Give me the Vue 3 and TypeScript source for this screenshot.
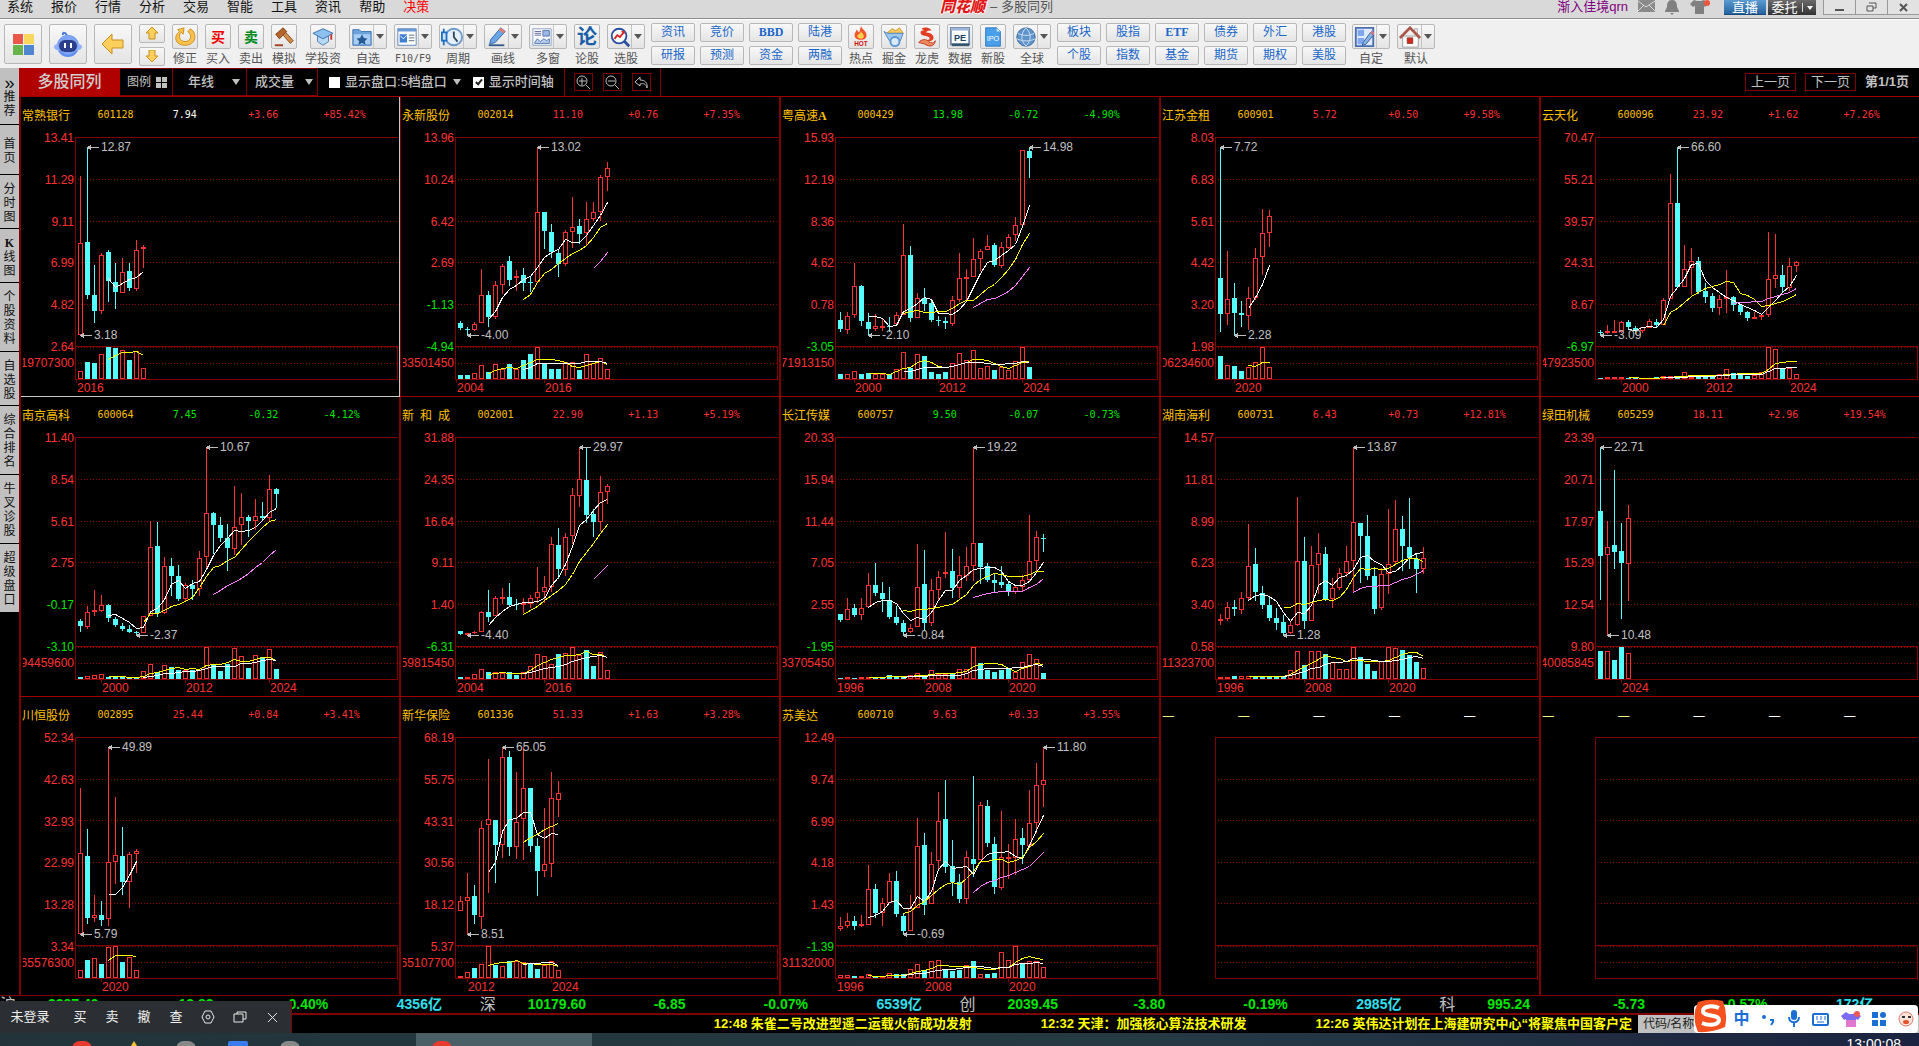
<script setup lang="ts">
interface Stock {
  name: string
  code: string
  price: string
  change: string
  pct: string
  tone: 'up' | 'down' | 'flat'
  axis: string[]
  volume: string
  high: [number, string]
  low: [number, string]
  years: [number, string][]
  candles: string
  ma: [number, string][]
  vol: string
  volMa: [number, string][]
}

/* Series heights are kept in thirds of a pixel, measured from the panel head. */
const UNIT = 3
const HEAD = 42
const STEP = 7
const FIRST = 5

const stocks: Stock[] = [
  {
    name: '常熟银行', code: '601128', price: '7.94', change: '+3.66', pct: '+85.42%', tone: 'flat',
    axis: ['13.41', '11.29', '9.11', '6.99', '4.82', '2.64'], volume: '19707300',
    high: [1, '12.87'], low: [0, '3.18'], years: [[-1, '2016']],
    candles: 'r445,719,243,719 c441,602,157,611 c602,648,510,683 r481,647,474,656 c471,560,465,620 c563,591,504,641 r532,591,489,593 c530,579,504,587 r465,581,435,587 r457,461,450,518',
    ma: [[4, '551 577 566 552 546 528']],
    vol: '828 801 804 778 756 759 766 795 770 820',
    volMa: [[4, '793 782 771 772 769 782']],
  },
  {
    name: '永新股份', code: '002014', price: '11.10', change: '+0.76', pct: '+7.35%', tone: 'up',
    axis: ['13.96', '10.24', '6.42', '2.69', '-1.13', '-4.94'], volume: '83501450',
    high: [11, '13.02'], low: [1, '-4.00'], years: [[-1, '2004'], [12, '2016']],
    candles: 'c684,701,678,704 c702,704,698,720 r688,704,682,706 r601,682,522,682 c600,668,588,695 r571,665,558,670 r514,569,507,595 c499,555,483,572 r544,548,525,585 c540,564,519,585 c561,564,545,588 r352,560,157,560 c351,410,351,459 c411,473,387,488 c474,507,465,543 r412,506,407,510 r397,410,307,456 c393,417,372,445 r374,413,321,447 r352,371,321,375 r247,350,240,375 r220,245,201,285',
    ma: [[4, '672 650 606 582 571 552 545 517 487 473 463 432 443 443 422 392 361 323'], [9, '613 597 562 534 523 504 489 476 465 450 426 396 384'], [19, '520 498 473']],
    vol: '840 840 836 811 831 808 822 809 822 795 777 757 805 822 822 803 803 825 778 806 790 823',
    volMa: [[4, '834 826 820 818 820 811 802 794 794 794 797 803 815 818 811 804 799 808'], [9, '824 817 806 805 804 804 804 805 805 800 799 800 806']],
  },
  {
    name: '粤高速A', code: '000429', price: '13.98', change: '-0.72', pct: '-4.90%', tone: 'down',
    axis: ['15.93', '12.19', '8.36', '4.62', '0.78', '-3.05'], volume: '71913150',
    high: [27, '14.98'], low: [4, '-2.10'], years: [[2, '2000'], [14, '2012'], [26, '2024']],
    candles: 'c675,704,651,708 r664,703,651,716 r574,659,504,666 c573,680,570,690 c681,702,655,720 r694,700,657,707 r693,696,670,706 c693,698,667,710 r661,686,652,690 r481,659,388,659 c480,671,453,679 r610,668,595,668 c609,627,579,645 c626,675,617,680 c675,678,663,690 c678,684,667,699 r616,684,604,692 r550,614,474,620 r546,549,522,615 r493,545,430,545 r469,490,463,525 r454,464,421,464 c450,510,445,513 r457,510,442,517 r428,458,417,460 r391,419,366,437 r166,389,166,389 c170,189,157,246',
    ma: [[4, '664 664 670 695 692 648 640 625 608 613 655 656 659 643 618 578 536 502 497 480 465 449 394 331'], [9, '656 648 647 653 652 650 650 640 625 616 616 597 580 568 547 522 493 447 414'], [19, '638 625 614 610 600 588 572 545 518']],
    vol: '837 838 829 838 834 838 837 837 823 772 821 778 783 831 838 831 805 775 796 766 820 814 825 817 826 799 757 816',
    volMa: [[4, '835 835 835 838 830 820 816 801 796 802 814 816 815 808 803 793 793 796 804 814 820 812 803 800'], [9, '829 828 822 817 817 817 817 815 808 803 803 803 806 809 808 806 806 799 802']],
  },
  {
    name: '江苏金租', code: '600901', price: '5.72', change: '+0.50', pct: '+9.58%', tone: 'up',
    axis: ['8.03', '6.83', '5.61', '4.42', '3.20', '1.98'], volume: '06234600',
    high: [0, '7.72'], low: [2, '2.28'], years: [[2, '2020']],
    candles: 'c549,657,157,708 r613,655,468,687 c609,654,564,720 c654,662,618,695 r610,661,576,702 r490,608,459,612 r415,485,342,537 r364,412,345,455',
    ma: [[4, '640 607 568 510']],
    vol: '783 811 814 828 817 802 757 817',
    volMa: [[4, '811 814 803 802']],
  },
  {
    name: '云天化', code: '600096', price: '23.92', change: '+1.62', pct: '+7.26%', tone: 'up',
    axis: ['70.47', '55.21', '39.57', '24.31', '8.67', '-6.97'], volume: '47923500',
    high: [11, '66.60'], low: [0, '-3.09'], years: [[3, '2000'], [15, '2012'], [27, '2024']],
    candles: 'c711,716,706,721 r710,713,692,716 r708,711,675,713 r682,710,678,712 c681,698,675,702 c699,708,693,714 r697,705,697,712 r679,696,672,696 c681,690,672,697 r616,689,609,689 r325,611,237,611 c324,576,157,576 r523,575,450,575 r499,518,459,597 c498,591,487,596 c590,606,564,621 c605,639,594,648 r613,637,600,657 r607,610,525,651 c606,632,603,645 c632,651,628,657 c651,669,648,675 r666,669,652,671 r661,665,660,674 r553,659,411,665 r541,551,417,578 c540,576,510,588 r514,576,491,585 r502,512,498,528',
    ma: [[4, '704 705 698 694 696 672 604 577 549 508 505 557 577 592 607 615 629 636 646 657 638 615 592 574 541'], [9, '690 652 640 622 603 592 580 575 568 559 563 594 602 613 633 632 626 618 609 598'], [19, '626 622 622 620 619 610 604 597 591 580']],
    vol: '849 847 847 847 849 849 849 849 847 844 844 844 832 846 846 846 846 837 823 834 838 843 840 832 757 763 822 820 838',
    volMa: [[4, '847 848 850 850 850 848 847 845 843 842 842 842 841 840 838 837 836 835 835 835 822 806 802 799 799'], [9, '848 848 847 846 845 845 845 844 842 840 839 839 838 838 838 828 821 820 818 817']],
  },
  {
    name: '南京高科', code: '600064', price: '7.45', change: '-0.32', pct: '-4.12%', tone: 'down',
    axis: ['11.40', '8.54', '5.61', '2.75', '-0.17', '-3.10'], volume: '94459600',
    high: [18, '10.67'], low: [8, '-2.37'], years: [[3, '2000'], [15, '2012'], [27, '2024']],
    candles: 'c678,695,672,708 r652,695,633,701 r646,650,586,660 r631,646,600,648 c630,671,628,680 c672,692,667,693 c693,702,684,706 c702,711,690,712 c711,714,708,721 r664,712,664,712 r457,662,378,662 c453,654,381,665 r514,653,487,655 c513,543,489,600 c543,612,510,617 r571,611,565,615 c570,582,555,612 r490,580,468,602 r355,485,157,522 c354,390,351,475 c390,431,366,438 c430,459,388,525 r398,460,273,477 r367,389,294,447 c366,378,360,423 r364,377,312,402 c363,370,321,375 r283,368,240,376 c282,297,279,336',
    ma: [[4, '661 659 670 681 700 697 650 640 612 568 557 580 565 558 523 480 452 429 406 408 405 396 375 353 339'], [9, '681 656 655 645 635 628 619 606 577 545 518 512 496 486 463 440 417 397 378 373'], [19, '599 585 572 562 550 536 517 501 482 462']],
    vol: '846 844 842 838 846 846 846 846 849 829 808 831 811 816 825 825 826 826 757 808 828 807 760 784 819 781 787 763 822',
    volMa: [[4, '845 845 845 846 847 843 836 832 825 819 818 822 821 822 812 808 808 803 793 799 799 794 787 787 797'], [9, '846 843 840 836 834 832 830 829 826 819 815 815 814 813 806 806 802 797 792 797']],
  },
  {
    name: '新\u2002和\u2002成', code: '002001', price: '22.90', change: '+1.13', pct: '+5.19%', tone: 'up',
    axis: ['31.88', '24.35', '16.64', '9.11', '1.40', '-6.31'], volume: '59815450',
    high: [17, '29.97'], low: [1, '-4.40'], years: [[-1, '2004'], [12, '2016']],
    candles: 'c708,717,708,717 r715,717,714,719 r711,713,708,714 r652,710,648,710 c651,666,585,680 r609,661,603,661 r606,609,579,625 c606,632,564,633 c627,630,612,643 r625,629,610,651 r610,625,601,637 r592,607,516,621 r577,590,543,621 r448,575,426,590 c450,524,399,549 r427,523,416,540 r301,422,279,445 r253,302,157,333 c255,360,157,381 c357,381,342,423 r292,379,243,405 r274,290,269,326',
    ma: [[4, '691 668 648 633 629 623 622 618 609 572 546 507 455 390 372 347 322 314'], [9, '658 647 633 617 600 585 567 538 499 471 446 415 387'], [19, '554 532 510']],
    vol: '847 846 838 824 831 832 834 833 840 832 814 778 785 808 777 775 757 780 766 813 772 826',
    volMa: [[4, '838 835 832 834 834 835 826 811 802 793 787 781 780 777 768 777 778 788'], [9, '834 832 827 820 818 814 807 799 794 787 784 781 788']],
  },
  {
    name: '长江传媒', code: '600757', price: '9.50', change: '-0.07', pct: '-0.73%', tone: 'down',
    axis: ['20.33', '15.94', '11.44', '7.05', '2.55', '-1.95'], volume: '83705450',
    high: [19, '19.22'], low: [9, '-0.84'], years: [[-1, '1996'], [12, '2008'], [24, '2020']],
    candles: 'c657,675,657,678 r643,674,609,674 c639,660,627,665 r640,658,609,674 r571,634,534,635 c570,594,504,600 c594,612,561,648 c615,666,576,671 c666,684,633,687 c684,711,675,722 r700,710,687,713 r577,695,447,695 c567,684,465,706 r586,683,552,692 r547,584,528,612 r532,535,411,547 c528,579,462,608 r541,578,483,607 r514,540,457,555 r445,512,157,555 c444,516,444,564 c513,555,504,560 c555,564,534,590 c561,570,514,577 c567,589,558,602 r577,588,570,596 r556,575,540,590 r499,554,360,559 r427,497,408,531 c429,431,417,468',
    ma: [[4, '637 622 616 617 626 655 677 668 672 652 615 587 586 557 540 522 519 516 518 528 560 570 571 558 533 502'], [9, '647 650 643 643 641 636 632 628 613 597 571 554 545 536 538 543 545 544 538 530 529'], [19, '607 602 596 593 590 590 589 588 576 567 551']],
    vol: '849 846 849 847 847 847 847 840 846 843 841 835 840 826 838 838 838 823 823 757 804 825 831 825 819 832 802 778 793 834',
    volMa: [[4, '847 847 847 845 845 844 844 842 841 838 835 835 835 833 830 815 807 805 806 808 820 829 821 815 805 809'], [9, '848 845 843 843 842 841 841 841 840 836 826 822 820 820 820 820 817 816 811 807 814']],
  },
  {
    name: '湖南海利', code: '600731', price: '6.43', change: '+0.73', pct: '+12.81%', tone: 'up',
    axis: ['14.57', '11.81', '8.99', '6.23', '3.40', '0.58'], volume: '11323700',
    high: [19, '13.87'], low: [9, '1.28'], years: [[-1, '1996'], [12, '2008'], [24, '2020']],
    candles: 'r672,677,657,687 r637,671,621,675 c636,642,615,660 r610,644,591,656 r514,607,387,616 c507,591,459,616 c594,630,573,639 c630,669,603,675 c669,684,639,704 c681,714,661,720 r691,711,681,714 r499,688,307,692 c498,678,426,701 r511,677,453,677 r475,509,414,594 c477,612,457,615 r580,611,550,638 r535,577,519,582 r499,533,453,545 r382,497,157,588 c384,423,384,561 c423,543,360,552 c543,642,517,656 r538,637,520,642 r508,536,342,594 r403,500,315,507 c402,453,363,525 c456,491,309,519 c492,522,476,591 r490,520,456,536',
    ma: [[4, '615 600 598 603 618 653 680 652 655 632 570 557 570 547 541 524 487 482 499 507 531 528 512 488 476 472'], [9, '637 637 626 628 621 615 613 616 608 582 547 520 523 521 523 520 508 495 491 491 498'], [19, '592 580 573 573 572 572 563 554 546 537 525']],
    vol: '848 847 844 844 843 846 846 845 847 844 827 769 811 769 769 777 803 823 822 757 787 808 829 800 757 760 766 781 801 820',
    volMa: [[4, '845 845 845 845 845 843 838 825 813 805 792 780 787 789 799 797 797 798 798 798 797 787 777 772 773 783'], [9, '844 841 836 828 821 818 809 803 802 798 791 792 793 796 798 798 797 792 788 784 790']],
  },
  {
    name: '绿田机械', code: '605259', price: '18.11', change: '+2.96', pct: '+19.54%', tone: 'up',
    axis: ['23.39', '20.71', '17.97', '15.29', '12.54', '9.80'], volume: '40085845',
    high: [0, '22.71'], low: [1, '10.48'], years: [[3, '2024']],
    candles: 'c348,483,157,612 r457,479,380,721 c450,471,225,519 c468,504,384,669 r370,506,330,617',
    ma: [], vol: '768 769 795 756 775', volMa: [],
  },
  {
    name: '川恒股份', code: '002895', price: '25.44', change: '+0.84', pct: '+3.41%', tone: 'up',
    axis: ['52.34', '42.63', '32.93', '22.99', '13.28', '3.34'], volume: '65576300',
    high: [4, '49.89'], low: [0, '5.79'], years: [[3, '2020']],
    candles: 'r475,716,279,716 c483,669,402,684 r661,668,600,678 c660,675,618,692 r502,671,157,692 r481,499,306,564 c483,561,396,597 r478,559,472,636 r469,475,462,531',
    ma: [[4, '597 598 576 542 499']],
    vol: '826 795 791 808 757 754 801 787 826',
    volMa: [[4, '796 782 781 781 785']],
  },
  {
    name: '新华保险', code: '601336', price: '51.33', change: '+1.63', pct: '+3.28%', tone: 'up',
    axis: ['68.19', '55.75', '43.31', '30.56', '18.12', '5.37'], volume: '65107700',
    high: [6, '65.05'], low: [1, '8.51'], years: [[1, '2012'], [13, '2024']],
    candles: 'r619,647,604,647 r607,617,534,718 c603,662,570,684 r400,664,378,699 r373,388,192,591 c375,450,375,561 r187,448,157,487 c186,456,168,480 r382,454,231,490 r280,370,157,492 c279,453,279,468 c453,528,429,600 r508,527,339,543 r310,505,231,543 r295,314,258,363',
    ma: [[4, '533 501 409 373 371 352 352 418 430 414 419'], [9, '442 428 418 403 393 385']],
    vol: '844 832 819 808 754 812 814 799 799 802 808 822 811 799 826',
    volMa: [[4, '811 806 801 801 796 804 806 808 808 809 815'], [9, '807 806 804 803 802 812']],
  },
  {
    name: '苏美达', code: '600710', price: '9.63', change: '+0.33', pct: '+3.55%', tone: 'up',
    axis: ['12.49', '9.74', '6.99', '4.18', '1.43', '-1.39'], volume: '31132000',
    high: [29, '11.80'], low: [9, '-0.69'], years: [[-1, '1996'], [12, '2008'], [24, '2020']],
    candles: 'r694,700,667,705 r679,692,654,698 c678,693,663,702 r688,692,662,695 r583,689,510,689 c582,654,567,666 r625,652,609,690 r559,622,534,622 c558,659,528,663 c663,708,658,719 r641,707,600,707 r454,638,369,638 c450,630,414,657 r508,626,471,626 r379,497,291,522 c372,516,255,531 c513,563,435,600 c561,612,537,621 r487,611,468,624 c492,507,243,543 r331,493,321,493 c333,444,315,453 c447,578,426,594 r486,578,348,582 r486,490,447,549 r433,488,372,537 c429,450,399,504 r385,451,285,451 r271,382,204,413 r256,269,157,333',
    ma: [[4, '667 662 650 621 617 640 640 604 618 590 524 499 520 518 514 538 499 479 471 471 468 484 490 452 407 360'], [9, '656 650 630 619 601 582 568 563 567 549 528 500 498 493 493 502 497 486 458 440 414'], [19, '592 574 562 557 547 542 532 523 514 494 473']],
    vol: '842 842 844 844 839 846 846 836 838 838 824 808 825 799 796 823 829 825 811 798 839 838 834 772 796 754 805 799 799 817',
    volMa: [[4, '842 844 844 841 841 841 835 829 826 820 811 811 814 815 815 818 821 823 823 818 817 801 791 785 789 794'], [9, '840 838 836 834 829 826 823 823 820 817 814 814 817 819 818 816 808 804 806 803 806']],
  },
]

const yOf = (v: number): number => Math.floor(v / UNIT) - HEAD
const xOf = (i: number): number => FIRST + STEP * i

function box(x: number, top: number, bottom: number): string {
  const h = bottom - top
  const outer = `M${x - 2} ${top}h5v${h}h-5z`
  return h > 2 ? outer + `M${x - 1} ${top + 1}v${h - 2}h3v${2 - h}z` : outer
}
const bar = (x: number, w: number, top: number, bottom: number): string =>
  bottom > top ? `M${x} ${top}h${w}v${bottom - top}h${-w}z` : ''

/* Left-pointing arrow that ties a price mark to its candle */
const arrow = (x: number, y: number): string =>
  bar(x, 12, y, y + 1) + bar(x + 1, 3, y - 1, y + 2) + bar(x + 3, 1, y - 2, y + 3)

function trace(start: number, series: string): string {
  return series.split(' ').map((v, k) => `${xOf(start + k) + 0.5},${yOf(+v) + 0.5}`).join(' ')
}

const panels = Array.from({ length: 15 }, (_, n) => {
  const s: Stock | undefined = stocks[n]
  const last = n >= 10
  const levels = last ? [0, 42, 83, 125, 166, 208] : [0, 42, 84, 125, 167, 209]
  const base = last ? 241 : 242
  let red = ''
  let cyan = ''
  if (s) {
    const vols = s.vol.split(' ').map(Number)
    s.candles.split(' ').forEach((c, i) => {
      const [t, b, h, l] = c.slice(1).split(',').map(Number)
      const x = xOf(i)
      const vt = yOf(vols[i])
      if (c[0] === 'r') {
        const top = yOf(t)
        const bottom = yOf(b) + 1
        red += box(x, top, bottom) + bar(x, 1, yOf(h), top) + bar(x, 1, bottom, yOf(l) + 1) + box(x, vt, base)
      } else {
        const top = yOf(t)
        const bottom = Math.max(top + 1, yOf(b))
        cyan += bar(x - 2, 5, top, bottom) + bar(x, 1, yOf(h), top) + bar(x, 1, bottom, yOf(l) + 1) + bar(x - 2, 5, vt, base)
      }
    })
  }
  const colors = ['#fff', '#ff0', '#ff80ff']
  const lines = s
    ? [
        ...s.ma.map(([i, d], k) => ({ points: trace(i, d), color: colors[k] })),
        ...s.volMa.map(([i, d], k) => ({ points: trace(i, d), color: k ? '#fff' : '#ff0' })),
      ]
    : []
  const marks = s
    ? [
        { x: xOf(s.high[0]), y: 10, text: s.high[1] },
        { x: xOf(s.low[0]), y: last ? 197 : 198, text: s.low[1] },
      ]
    : []
  const years = s ? s.years.map(([i, text]) => ({ x: Math.max(1, xOf(i)), text })) : []
  return { n, s, levels, base, red, cyan, lines, marks, years }
})

const menus = ['系统', '报价', '行情', '分析', '交易', '智能', '工具', '资讯', '帮助', '决策']
const side = ['»推荐', '首页', '分时图', 'K线图', '个股资料', '自选股', '综合排名', '牛叉诊股', '超级盘口']

interface Tool { label: string; icon: string; split?: boolean; wide?: boolean }
const toolsA: Tool[] = [
  { label: '修正', icon: 'redo' },
  { label: '买入', icon: 'buy' },
  { label: '卖出', icon: 'sell' },
  { label: '模拟', icon: 'gavel' },
  { label: '学投资', icon: 'cap', wide: true },
  { label: '自选', icon: 'star', split: true },
  { label: 'F10/F9', icon: 'doc', split: true },
  { label: '周期', icon: 'clock', split: true },
  { label: '画线', icon: 'pencil', split: true },
  { label: '多窗', icon: 'windows', split: true },
  { label: '论股', icon: 'talk' },
  { label: '选股', icon: 'search', split: true },
]
const toolsB: Tool[] = [
  { label: '热点', icon: 'hot' },
  { label: '掘金', icon: 'cart' },
  { label: '龙虎', icon: 'dragon' },
  { label: '数据', icon: 'pe' },
  { label: '新股', icon: 'ipo' },
  { label: '全球', icon: 'globe', split: true },
]
const toolsC: Tool[] = [
  { label: '自定', icon: 'custom', split: true },
  { label: '默认', icon: 'home', split: true },
]
const linksA = ['资讯', '竞价', 'BBD', '陆港', '研报', '预测', '资金', '两融']
const linksB = ['板块', '股指', 'ETF', '债券', '外汇', '港股', '个股', '指数', '基金', '期货', '期权', '美股']

/* Inner markup of the 24 × 24 toolbar glyphs */
const icons: Record<string, string> = {
  redo: '<path d="M4 4l7-2-1 7-2-2c-4 3-2 10 4 10 7 0 8-8 3-11l3-3c8 5 6 18-6 18C1 21-1 11 6 6z" fill="#f8c24c" stroke="#c98a1c"/>',
  gavel: '<path d="M3 9l8-7 4 4-8 8z" fill="#b5652b" stroke="#7a3d14"/><path d="M11 10l3-3 8 9-3 3z" fill="#d08a4a" stroke="#8a4a1c"/><path d="M2 20h9v2H2z" fill="#a33b1d"/>',
  cap: '<path d="M12 3l11 5-11 6L1 8z" fill="#8cc0ee" stroke="#3b6ea8"/><path d="M6 11v6l6 4 6-4v-6l-6 3z" fill="#b7d9f6" stroke="#4a7db5"/><path d="M21 9v6" stroke="#c33" stroke-width="2"/>',
  star: '<path d="M2 4h7l2 2h11v15H2z" fill="#6ba3dd" stroke="#3c72ad"/><path d="M3 9h18v11H3z" fill="#a9cdf2"/><path d="M12 9l2 4 4 .5-3 3 1 4-4-2-4 2 1-4-3-3 4-.5z" fill="#245a96"/>',
  doc: '<path d="M2 3h20v18H2z" fill="#fff" stroke="#5b80b5"/><path d="M2 3h20v3H2z" fill="#6a9ad6"/><path d="M4 9h8v9H4z" fill="#3f7fd0"/><path d="M5 11l3 3 4-4" stroke="#fff" fill="none"/><path d="M14 10h6M14 13h6M14 16h6" stroke="#567"/>',
  clock: '<circle cx="14" cy="12" r="9" fill="#e4f0fb" stroke="#6c98c9" stroke-width="2"/><path d="M14 6v6l4 5" stroke="#345" fill="none" stroke-width="2"/><path d="M1 7h5v9H1zM3 3v4M3 16v5" fill="#cfe4fa" stroke="#1f6fc4" stroke-width="2"/>',
  pencil: '<path d="M5 15L16 2l5 4L10 18l-6 2z" fill="#6aa6e4" stroke="#2f68a8"/><path d="M16 2l5 4-2 2-5-4z" fill="#e87a6a"/><path d="M3 21h17" stroke="#345a8a" stroke-width="2"/>',
  windows: '<path d="M2 3h20v18H2z" fill="#f4f7fc" stroke="#8fa3c4"/><path d="M4 6h7M4 8h7M4 10h7" stroke="#669"/><path d="M13 5h7v6h-7z" fill="#9db8e8" stroke="#57a"/><path d="M4 18l3-4 3 3 4-3 3 2 3-2v5H4z" fill="#b8cdf0" stroke="#57a"/>',
  search: '<circle cx="11" cy="11" r="8" fill="#fff" stroke="#2a4fa0" stroke-width="2"/><path d="M17 17l5 5" stroke="#2a4fa0" stroke-width="3"/><path d="M6 14l3-4 3 2 4-5" stroke="#d22" stroke-width="2" fill="none"/><path d="M17 5v4l-4-3z" fill="#d22"/>',
  hot: '<path d="M12 0c1 4 6 5 6 10 0 4-3 5-6 5s-7-1-7-5c0-3 2-4 2-6 2 1 2 3 3 3 1-2 1-4 2-7z" fill="#f2552c"/><path d="M12 6c1 2 3 3 3 5s-1 3-3 3-4-1-4-3 3-2 4-5z" fill="#ffd34d"/><text x="12" y="22" text-anchor="middle" font-family="Liberation Sans,sans-serif" font-weight="700" font-size="7" fill="#c11">HOT</text>',
  cart: '<path d="M4 8l6-5 4 2 4-3 4 6z" fill="#f6c860" stroke="#c99b2c"/><path d="M1 6l4 2h17l-3 8H7z" fill="#9cc8f0" stroke="#4f86bd"/><circle cx="13" cy="17" r="5" fill="#d8eafa" stroke="#5b93cc" stroke-width="2"/>',
  dragon: '<path d="M6 3c4-3 10-1 11 2-3 0-5 0-6 2 5 0 9 3 8 7-1 3-5 3-7 2 2-1 4-2 2-4-4-2-9-1-9-5 0-2 2-2 4-2z" fill="#e23c22"/><path d="M3 18c3-4 9-4 11-1 2 2 6 2 7-1 0 5-5 7-9 5-3-2-6-2-9-3z" fill="#f08a5a" stroke="#b32"/>',
  pe: '<path d="M2 2h20v18H2z" fill="#fff" stroke="#7089ad" stroke-width="2"/><path d="M2 2h20v3H2z" fill="#9db4d4"/><path d="M3 19h19v3H3z" fill="#34566e"/><text x="12" y="16" text-anchor="middle" font-family="Liberation Sans,sans-serif" font-weight="700" font-size="10" fill="#246">PE</text>',
  ipo: '<path d="M4 2h12l4 4v16H4z" fill="#4aa0e8" stroke="#2a76bd"/><path d="M16 2v4h4z" fill="#cfe6fa"/><text x="12" y="16" text-anchor="middle" font-family="Liberation Sans,sans-serif" font-size="8" fill="#fff">IPO</text>',
  globe: '<circle cx="12" cy="12" r="10" fill="#5f93c9" stroke="#3a6a9c"/><path d="M3 8c6 3 12 3 18 0M2 14c7 3 13 3 20 0M12 2c-6 6-6 14 0 20M12 2c6 6 6 14 0 20" fill="none" stroke="#cfe2f4"/>',
  custom: '<path d="M2 2h19v20H2z" fill="#dfeafc" stroke="#4a6fae" stroke-width="2"/><path d="M4 4h7v7H4zM4 13h7v7H4z" fill="#7fa6ee"/><path d="M10 18l8-11 3 3-8 10-4 1z" fill="#8ab4e4" stroke="#345a9a"/><path d="M18 7l1-2 3 3-1 2z" fill="#e77"/>',
  home: '<path d="M4 11h17v12H4z" fill="#fff" stroke="#999"/><path d="M17 3h3v6h-3z" fill="#eee" stroke="#aaa"/><path d="M1 13L12 2l11 11" fill="none" stroke="#a8584a" stroke-width="3"/><path d="M9 13h6v6H9z" fill="#d22a1c" stroke="#8a3a2a"/>',
}

const quotes = [
  { tag: '沪', value: '3387.49', diff: '-13.83', pct: '-0.40%', sum: '4356亿' },
  { tag: '深', value: '10179.60', diff: '-6.85', pct: '-0.07%', sum: '6539亿' },
  { tag: '创', value: '2039.45', diff: '-3.80', pct: '-0.19%', sum: '2985亿' },
  { tag: '科', value: '995.24', diff: '-5.73', pct: '-0.57%', sum: '172亿' },
]
const news = ['12:48 朱雀二号改进型遥二运载火箭成功发射', '12:32 天津：加强核心算法技术研发', '12:26 英伟达计划在上海建研究中心“将聚焦中国客户定']
</script>

<template>
  <div class="app">
    <header class="menubar">
      <nav class="menus">
        <a v-for="m in menus" :key="m" href="#" :class="{ hot: m === '决策' }">{{ m }}</a>
      </nav>
      <h1 class="title"><b>同花顺</b><span>– 多股同列</span></h1>
      <div class="account">
        <a href="#" class="user">渐入佳境qrn</a>
        <svg width="17" height="12" viewBox="0 0 17 12"><path d="M0 0h17v12H0z" fill="#8a8a8a" /><path d="M0 1l8 6 9-6M0 11l6-6M17 11l-6-6" fill="none" stroke="#d9d9d9" stroke-width="1" /></svg>
        <svg width="15" height="15" viewBox="0 0 15 15"><path d="M7 0c4 0 5 3 5 7l2 4v1H0v-1l2-4c0-4 1-7 5-7zM5 13h4l-2 2z" fill="#808080" /></svg>
        <svg width="21" height="15" viewBox="0 0 21 15"><path d="M4 0l3 1 4 0 3-1 4 4-3 3-1-1v8H5V6L3 7 0 4z" fill="#808080" /><circle cx="17" cy="3" r="3" fill="#f0563c" /></svg>
        <button class="live">直播</button>
        <button class="trade">委托<i></i><span class="tri"></span></button>
        <div class="win">
          <button aria-label="最小化"><svg width="9" height="10"><path d="M0 7h9v2H0z" fill="#555" /></svg></button>
          <button aria-label="还原"><svg width="11" height="10"><path d="M3 1h7v5H7M1 4h6v5H1z" fill="none" stroke="#555" /></svg></button>
          <button aria-label="关闭"><svg width="9" height="9"><path d="M1 1l7 7M8 1L1 8" stroke="#555" stroke-width="2" /></svg></button>
        </div>
      </div>
    </header>

    <div class="toolbar">
      <button class="big" aria-label="首页"><svg width="21" height="21" viewBox="0 0 21 21"><path d="M0 0h10v10H0z" fill="#e8574a" /><path d="M11 0h10v10H11z" fill="#f7d65c" /><path d="M0 11h10v10H0z" fill="#69b34c" /><path d="M11 11h10v10H11z" fill="#4f86cf" /></svg></button>
      <button class="big" aria-label="助手"><svg width="28" height="28" viewBox="0 0 28 28"><path d="M13 6c-1-4-5-4-4-1" fill="none" stroke="#4a76dc" stroke-width="2" /><circle cx="14" cy="16" r="11" fill="#5f8cf0" /><ellipse cx="14" cy="17" rx="14" ry="5" fill="#8fb0f8" /><circle cx="14" cy="15" r="10" fill="#7ea4f5" /><rect x="5" y="10" width="18" height="12" rx="6" fill="#2b3f8c" /><path d="M10 13h2v5h-2zM16 13h2v5h-2z" fill="#fff" /></svg></button>
      <button class="big" aria-label="返回"><svg width="24" height="24" viewBox="0 0 24 24"><path d="M11 2v6h11v8H11v6L1 12z" fill="#fbcf5c" stroke="#c98d1e" /></svg></button>
      <div class="updown">
        <button aria-label="上一个"><svg width="14" height="13" viewBox="0 0 14 13"><path d="M7 0l6 6H10v6H4V6H1z" fill="#fbcf5c" stroke="#c98d1e" /></svg></button>
        <button aria-label="下一个"><svg width="14" height="13" viewBox="0 0 14 13"><path d="M7 12l6-6H10V0H4v6H1z" fill="#fbcf5c" stroke="#c98d1e" /></svg></button>
      </div>
      <template v-for="(group, g) in [toolsA, toolsB, toolsC]" :key="g">
        <div v-for="t in group" :key="t.label" class="tool" :class="{ split: t.split, wide: t.wide }">
          <button class="face" :aria-label="t.label">
            <span class="pic">
              <b v-if="t.icon === 'buy'" class="glyph buy">买</b>
              <b v-else-if="t.icon === 'sell'" class="glyph sell">卖</b>
              <b v-else-if="t.icon === 'talk'" class="glyph talk">论</b>
              <svg v-else width="22" height="22" viewBox="0 0 24 24" v-html="icons[t.icon]"></svg>
            </span>
            <span v-if="t.split" class="drop"><span class="tri"></span></span>
          </button>
          <span class="caption" :class="{ latin: t.label.startsWith('F') }">{{ t.label }}</span>
        </div>
        <div v-if="g < 2" class="links" :class="g ? 'six' : 'four'">
          <button v-for="l in g ? linksB : linksA" :key="l" :class="{ serif: /^[A-Z]+$/.test(l) }">{{ l }}</button>
        </div>
      </template>
    </div>

    <div class="main">
      <aside class="side">
        <button v-for="s in side" :key="s" :class="'len' + s.length">
          <span v-for="ch in s" :key="ch" :class="{ serif: ch === 'K', more: ch === '»' }">{{ ch }}</span>
        </button>
      </aside>

      <div class="work">
        <div class="tabs">
          <h2>多股同列</h2>
          <button class="cell legend">图例<svg width="11" height="11"><path d="M0 0h5v5H0zM6 0h5v5H6zM0 6h5v5H0zM6 6h5v5H6z" fill="#c0c0c0" /></svg></button>
          <label class="cell period"><select aria-label="周期"><option>年线</option></select><span class="tri"></span></label>
          <label class="cell kind"><select aria-label="指标"><option>成交量</option></select><span class="tri"></span></label>
          <div class="checks">
            <input id="book" type="checkbox"><label for="book">显示盘口:</label>
            <label class="depth"><select aria-label="盘口档位"><option>5档盘口</option></select><span class="tri"></span></label>
            <input id="axis" type="checkbox" checked><label for="axis">显示时间轴</label>
          </div>
          <div class="zooms">
            <button aria-label="放大"><svg width="15" height="15"><circle cx="6" cy="6" r="5" fill="none" stroke="#c0c0c0" /><path d="M3 6h7M6 3v7M10 10l4 4" stroke="#c0c0c0" /></svg></button>
            <button aria-label="缩小"><svg width="15" height="15"><circle cx="6" cy="6" r="5" fill="none" stroke="#c0c0c0" /><path d="M3 6h7M10 10l4 4" stroke="#c0c0c0" /></svg></button>
            <button aria-label="撤销"><svg width="15" height="15"><path d="M6 2L1 7l5 4V9c4-1 6 0 7 4 1-5-2-8-7-8z" fill="none" stroke="#c0c0c0" /></svg></button>
          </div>
          <div class="pager">
            <button>上一页</button>
            <button>下一页</button>
            <b>第1/1页</b>
          </div>
        </div>

        <div class="grid">
          <section v-for="p in panels" :key="p.n" class="panel" :class="{ picked: p.n === 0, last: p.n >= 10 }">
            <div v-if="p.s" class="head" :class="p.s.tone">
              <span class="name">{{ p.s.name.replace('A', '') }}<b v-if="p.s.name.endsWith('A')">A</b></span>
              <span class="code">{{ p.s.code }}</span>
              <span class="price">{{ p.s.price }}</span>
              <span>{{ p.s.change }}</span>
              <span>{{ p.s.pct }}</span>
            </div>
            <div v-else class="head blank"><span v-for="k in 5" :key="k">—</span></div>
            <div class="chart">
              <div class="axis">
                <div class="levels"><span v-for="a in p.s?.axis ?? []" :key="a" :class="{ neg: a.startsWith('-') }">{{ a }}</span></div>
                <span class="volume">{{ p.s?.volume }}</span>
              </div>
              <div class="plot">
                <svg width="100%" :height="p.base + 1">
                  <g shape-rendering="crispEdges">
                    <path d="M0 0h1v242h-1z" fill="#800000" />
                    <line v-for="y in p.levels.slice(1, 5)" :key="y" x1="3" x2="100%" :y1="y + 0.5" :y2="y + 0.5" class="dots" />
                    <line x1="3" x2="100%" :y1="p.levels[5] + 1.5" :y2="p.levels[5] + 1.5" class="dots" />
                    <line x1="3" x2="100%" :y1="p.base - 15.5" :y2="p.base - 15.5" class="dots" />
                    <rect x="0" y="0" width="100%" height="1" fill="#800000" />
                    <rect x="0" :y="p.levels[5]" width="100%" height="1" fill="#800000" />
                    <rect x="0" :y="p.base" width="100%" height="1" fill="#800000" />
                    <path :d="p.red" fill="#ff3232" fill-rule="evenodd" />
                    <path :d="p.cyan" fill="#54fcfc" />
                    <polyline v-for="(l, k) in p.lines" :key="k" :points="l.points" fill="none" :stroke="l.color" />
                    <path v-for="m in p.marks" :key="m.text" :d="arrow(m.x, m.y)" fill="#c0c0c0" />
                  </g>
                  <text v-for="m in p.marks" :key="m.text" :x="m.x + 14" :y="m.y + 4" class="mark">{{ m.text }}</text>
                </svg>
                <i class="edge"></i>
                <svg class="years" width="100%" height="16">
                  <g v-for="y in p.years" :key="y.text">
                    <rect :x="y.x" y="0" width="1" height="3" fill="#800000" />
                    <text :x="y.x + 1" y="12">{{ y.text }}</text>
                  </g>
                </svg>
              </div>
            </div>
          </section>
        </div>
      </div>
    </div>

    <footer class="feeds">
      <div class="ticker">
        <div v-for="q in quotes" :key="q.tag" class="quote">
          <span class="tag">{{ q.tag }}</span><span>{{ q.value }}</span><span>{{ q.diff }}</span><span>{{ q.pct }}</span><span class="sum">{{ q.sum }}</span>
        </div>
      </div>
      <div class="newsrow">
        <div class="news"><a v-for="n in news" :key="n" href="#">{{ n }}</a></div>
        <input type="text" placeholder="代码/名称" aria-label="代码/名称">
      </div>
      <div class="dock">
        <button class="login">未登录</button>
        <button v-for="d in ['买', '卖', '撤', '查']" :key="d">{{ d }}</button>
        <button aria-label="设置"><svg width="14" height="14"><path d="M4 1h6l3 6-3 6H4L1 7z" fill="none" stroke="#e8e8e8" /><circle cx="7" cy="7" r="2" fill="none" stroke="#e8e8e8" /></svg></button>
        <button aria-label="窗口"><svg width="14" height="12"><path d="M4 3V1h9v7h-3M1 3h9v8H1z" fill="none" stroke="#e8e8e8" /></svg></button>
        <button aria-label="收起"><svg width="11" height="11"><path d="M1 1l9 9M10 1l-9 9" stroke="#e8e8e8" /></svg></button>
      </div>
      <div class="ime">
        <svg class="logo" width="36" height="34" viewBox="0 0 36 34"><path d="M6 3Q18-1 31 2q5 13 2 26-13 6-27 5Q-1 18 6 3z" fill="#f4511e" /><path d="M27 9c-6-3-16-2-16 3 0 6 16 3 16 9 0 5-10 6-17 3" fill="none" stroke="#fff" stroke-width="4" /></svg>
        <b>中</b>
        <svg width="14" height="14"><circle cx="3" cy="5" r="2" fill="#1a6fd4" /><path d="M9 8h3v2l-2 3" fill="none" stroke="#1a6fd4" stroke-width="2" /></svg>
        <svg width="14" height="18"><rect x="4" y="0" width="6" height="10" rx="3" fill="#1a6fd4" /><path d="M2 7c0 7 10 7 10 0M7 12v5" fill="none" stroke="#1a6fd4" stroke-width="2" /></svg>
        <svg width="17" height="13"><rect x="1" y="1" width="15" height="11" rx="1" fill="none" stroke="#1a6fd4" stroke-width="2" /><path d="M4 4h2M8 4h2M12 4h2M4 6h2M8 6h2M12 6h2M5 9h7" stroke="#1a6fd4" /></svg>
        <svg width="20" height="18"><path d="M5 2l3 2h4l3-2 5 4-3 4-2-1v8H5V9l-2 1-3-4z" fill="#7a6cf0" /><path d="M5 10h10v7H5z" fill="#e078d0" /><circle cx="16" cy="4" r="3" fill="#f05a50" /></svg>
        <svg width="14" height="14"><path d="M0 0h6v6H0zM8 8h6v6H8zM0 8h6v6H0z" fill="#1a6fd4" /><circle cx="11" cy="3" r="3" fill="#1a6fd4" /></svg>
        <svg width="17" height="20"><circle cx="8" cy="10" r="7" fill="#fbe3da" stroke="#e0786a" /><path d="M4 8h3M10 8h3" stroke="#333" stroke-width="2" /><ellipse cx="8" cy="13" rx="3" ry="2" fill="#e8502c" /></svg>
      </div>
    </footer>

    <div class="taskbar">
      <i class="red"></i><i class="yellow"></i><i class="grey"></i><i class="blue"></i><i class="grey"></i>
      <span class="open"><i class="red"></i></span>
      <time>13:00:08</time>
    </div>
  </div>
</template>

<style>
body {
  margin: 0;
  background: #000;
}
</style>

<style scoped>
.app {
  height: 100vh;
  overflow: hidden;
  display: flex;
  flex-direction: column;
  background: #000;
  font: 12px/14px "Liberation Sans", "Noto Sans CJK SC", sans-serif;
  color: #c0c0c0;
}
.app > * { flex: none; }
button, select, input { font: inherit; color: inherit; margin: 0; padding: 0; }
button { border: 0; background: none; cursor: pointer; white-space: nowrap; }
a { color: inherit; text-decoration: none; }
.tri {
  border: 4px solid transparent;
  border-top: 5px solid #555;
  border-bottom: 0;
}

/* title row */
.menubar {
  display: grid;
  grid-template-columns: 1fr auto 1fr;
  height: 18px;
  background: #d9d9d9;
  border-bottom: 1px solid #8c8c8c;
  box-shadow: 0 1px #fff;
  margin-bottom: 1px;
  font-size: 13px;
  color: #111;
}
.menus { display: flex; gap: 18px; padding-left: 7px; }
.menus .hot { color: #f00; }
.title { display: flex; gap: 5px; margin: 0; padding-left: 74px; font-size: 13px; font-weight: 400; color: #555; }
.title b {
  font-size: 15px;
  line-height: 14px;
  font-style: italic;
  font-weight: 900;
  color: #e01818;
  text-shadow: 1px 0 #fff, -1px 0 #fff, 0 1px #fff;
}
.account { display: flex; justify-content: flex-end; align-items: flex-start; gap: 10px; }
.account svg { flex: none; }
.user { color: #800080; }
.live, .trade { height: 15px; color: #fff; line-height: 13px; }
.live { width: 42px; margin-left: 3px; background: linear-gradient(#5b9bd0, #23629e); border-bottom: 1px solid #1b4a78; }
.trade { display: flex; align-items: center; justify-content: center; gap: 4px; width: 48px; margin-left: -8px; background: linear-gradient(#6a6a6a, #333); }
.trade i { width: 1px; height: 9px; background: #ddd; }
.trade .tri { border-top-color: #fff; border-width: 4px 3px 0; }
.win { display: flex; margin-left: -3px; }
.win button { width: 33px; height: 15px; display: flex; align-items: center; justify-content: center; border: 1px solid #999; border-top: 0; margin-right: -1px; background: #e2e2e2; }

/* tool row */
.toolbar {
  display: flex;
  gap: 7px;
  height: 44px;
  padding: 4px 4px 0;
  background: #f0f0f0;
}
.toolbar button { box-sizing: border-box; border: 1px solid #b8b8b8; border-radius: 2px; background: linear-gradient(#f8f8f8, #e4e4e4); }
.toolbar .big { width: 38px; height: 40px; display: flex; align-items: center; justify-content: center; }
.updown { display: flex; flex-direction: column; gap: 4px; }
.updown button { width: 26px; height: 19px; display: flex; align-items: center; justify-content: center; }
.tool { width: 26px; display: flex; flex-direction: column; align-items: center; gap: 3px; }
.tool.split, .tool.wide { width: 38px; }
.tool .face { width: 26px; height: 25px; display: flex; align-items: stretch; }
.tool.split .face { width: 38px; }
.pic { flex: 1; display: flex; align-items: center; justify-content: center; }
.drop { width: 12px; display: flex; align-items: center; justify-content: center; border-left: 1px solid #c4c4c4; }
.caption { color: #555; white-space: nowrap; }
.caption.latin { font-family: "DejaVu Sans Mono", monospace; font-size: 10px; }
.glyph { font-size: 14px; line-height: 20px; }
.buy { color: #f00000; }
.sell { color: #008a1c; }
.talk { color: #1a5fa8; font-size: 20px; }
.links { display: grid; gap: 3px 5px; height: 42px; margin: -1px -1px 0; }
.four { grid-template-columns: repeat(4, 44px); }
.six { grid-template-columns: repeat(6, 44px); }
.links button { height: 19px; line-height: 17px; color: #1a66c8; }
.links .serif { font-family: "Liberation Serif", serif; font-weight: 700; }

/* side tabs */
.main { display: flex; }
.side { width: 19px; flex: none; }
.side button {
  box-sizing: border-box;
  width: 19px;
  display: flex;
  flex-direction: column;
  align-items: center;
  justify-content: center;
  padding-top: 2px;
  background: #c0c0c0;
  border-bottom: 1px solid #000;
  color: #111;
}
.side .len2 { height: 50px; }
.side .len3 { height: 54px; }
.side .len4 { height: 69px; }
.side button:first-child { height: 57px; }
.side .serif { font-family: "Liberation Serif", serif; font-weight: 700; }
.side .more { font-size: 18px; }

/* view tabs */
.work { flex: 1; min-width: 0; }
.tabs { display: flex; align-items: stretch; height: 28px; font-size: 13px; }
.tabs h2 { width: 101px; margin: 0; background: #b00000; font-size: 16px; line-height: 28px; font-weight: 500; text-align: center; color: #d0d0d0; }
.cell { box-sizing: border-box; display: flex; align-items: center; justify-content: space-between; border: 1px solid #800000; border-left-width: 0; }
.legend { width: 53px; padding: 0 5px 0 7px; font-size: 12px; }
.period { width: 74px; padding: 0 6px 0 15px; }
.kind { width: 71px; padding: 0 4px 0 8px; }
.tabs select { appearance: none; border: 0; background: none; font-weight: 500; outline: 0; }
.tabs .tri { border-width: 6px 4px 0; border-top-color: #c0c0c0; }
.checks { display: flex; align-items: center; width: 235px; padding-left: 11px; border-right: 1px solid #800000; font-weight: 500; white-space: nowrap; }
.checks input { appearance: none; width: 11px; height: 11px; margin-right: 5px; background: #fff; flex: none; }
.checks input:checked { position: relative; }
.checks input:checked::after { content: ""; position: absolute; left: 4px; top: 1px; width: 2px; height: 5px; border: solid #222; border-width: 0 2px 2px 0; transform: rotate(40deg); }
.depth { display: flex; align-items: center; gap: 5px; margin-right: 12px; }
.zooms { display: flex; align-items: center; gap: 10px; padding: 0 9px; border-right: 1px solid #800000; }
.zooms button { width: 19px; height: 18px; box-sizing: border-box; display: flex; align-items: center; justify-content: center; border: 1px solid #800000; }
.pager { flex: 1; display: flex; align-items: center; justify-content: flex-end; gap: 9px; padding-right: 10px; }
.pager button { width: 51px; height: 18px; line-height: 14px; border: 1px solid #800000; box-sizing: border-box; }

/* chart panels */
.grid { display: grid; grid-template-columns: repeat(5, 1fr); }
.panel { position: relative; min-width: 0; height: 299px; border-top: 1px solid #a00000; border-left: 2px solid #800000; box-sizing: content-box; }
.panel.last { height: 298px; }
.picked::after { content: ""; position: absolute; inset: 0 -1px -1px 0; border: solid #c8c8c8; border-width: 0 1px 1px 0; pointer-events: none; z-index: 1; }
.head { display: grid; grid-template-columns: repeat(5, 1fr); height: 40px; padding-left: 1px; line-height: 36px; font-family: "DejaVu Sans Mono", monospace; font-size: 10px; white-space: nowrap; color: #ff3232; }
.head span { min-width: 0; }
.head .name { font-family: "Noto Sans CJK SC", sans-serif; font-size: 12px; color: #ffc000; }
.name b { font-family: "Liberation Serif", serif; font-size: 12px; }
.head .code { color: #ffc000; }
.head.down { color: #00e600; }
.flat .price { color: #fff; }
.blank { color: #fff; font-family: "Noto Sans CJK SC", sans-serif; font-size: 14px; line-height: 34px; }
.blank span:nth-child(-n + 2) { color: #f0f080; }
.chart { display: grid; grid-template-columns: 54px 1fr; padding-right: 1px; }
.axis { display: flex; flex-direction: column; min-width: 0; overflow: hidden; margin-top: -6px; padding-right: 1px; color: #ff3232; text-align: right; }
.levels { display: flex; flex-direction: column; justify-content: space-between; height: 223px; }
.neg { color: #00e600; }
.volume { display: flex; justify-content: flex-end; overflow: hidden; height: 18px; line-height: 18px; margin-left: 2px; }
.plot { position: relative; min-width: 0; }
.plot svg { display: block; }
.dots { stroke: #800000; stroke-dasharray: 1 2; }
.mark { font-size: 12px; fill: #c0c0c0; }
.edge { position: absolute; right: 0; top: 210px; width: 1px; height: 33px; background: #800000; }
.years text { font-size: 12px; fill: #ff3232; }

/* index ticker and headlines */
.feeds { position: relative; border-top: 1px solid #800000; }
.ticker { display: grid; grid-template-columns: repeat(4, 1fr); height: 17px; line-height: 17px; font-size: 14px; border-bottom: 2px solid #800000; overflow: hidden; }
.quote { display: grid; grid-template-columns: 48fr 126fr 110fr 113fr 83fr; color: #00e600; font-weight: 700; white-space: nowrap; }
.quote .tag { font-size: 16px; font-weight: 400; color: #c0c0c0; }
.quote .sum { color: #30e0f0; }
.newsrow { display: flex; height: 18px; }
.news { flex: 1; min-width: 0; display: flex; gap: 69px; padding-left: 37.2%; overflow: hidden; white-space: nowrap; font-size: 13px; line-height: 18px; font-weight: 700; color: #ff0; }
.newsrow input { width: 281px; box-sizing: border-box; padding-left: 5px; border: 0; background: #c0c0c0; color: #222; }
.newsrow input::placeholder { color: #222; opacity: 1; }
.dock {
  position: absolute;
  left: 0;
  bottom: 0;
  display: flex;
  align-items: center;
  height: 32px;
  width: 291px;
  background: #2b2f33;
  color: #f0f0f0;
  border-right: 1px solid #800000;
}
.dock button { width: 32px; height: 30px; font-size: 13px; display: flex; align-items: center; justify-content: center; }
.dock .login { width: 64px; padding-right: 4px; }
.ime {
  position: absolute;
  right: 1px;
  bottom: 0;
  display: flex;
  align-items: center;
  justify-content: space-between;
  width: 221px;
  height: 28px;
  padding-right: 3px;
  border-radius: 4px;
  background: #fff;
  color: #1a6fd4;
  font-size: 16px;
}
.ime .logo { margin: -6px -6px 0 -2px; }
.taskbar {
  display: flex;
  align-items: flex-start;
  gap: 32px;
  height: 40px;
  padding-left: 72px;
  background: linear-gradient(90deg, #22343a, #263a44 60%, #1b2340);
}
.taskbar i { width: 20px; height: 16px; margin-top: 8px; border-radius: 8px 8px 0 0; background: #888; }
.taskbar .red { background: #e83a30; }
.taskbar .yellow { background: #f2c230; clip-path: polygon(50% 0, 100% 100%, 0 100%); }
.taskbar .blue { background: #3a7cf0; border-radius: 2px; }
.open { width: 176px; height: 40px; display: flex; justify-content: flex-start; padding-left: 16px; box-sizing: border-box; margin-left: 84px; background: #4b5f66; }
.taskbar time { margin-left: auto; padding: 4px 18px 0 0; font-size: 14px; color: #fff; }
</style>
